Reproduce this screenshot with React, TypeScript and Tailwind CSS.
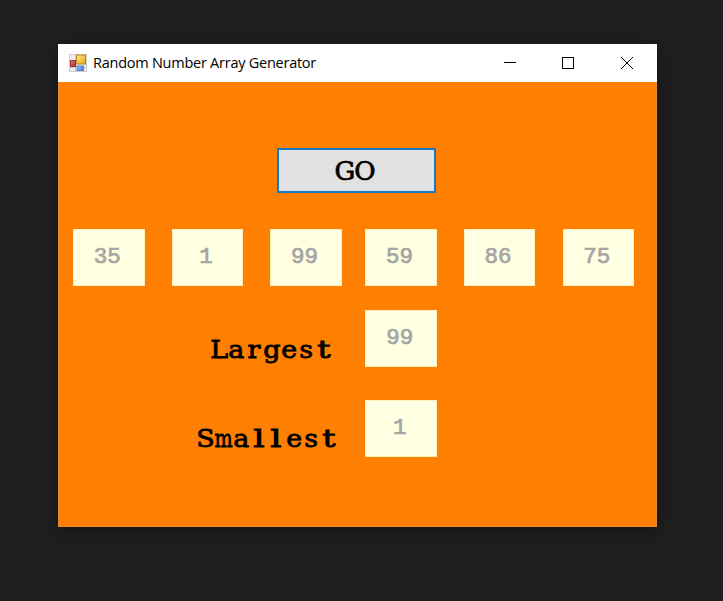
type BoxProps = { value: number; className?: string };

function NumberBox({ value, className = "" }: BoxProps) {
  return (
    <div
      className={`h-[57px] w-[71.5px] shrink-0 border border-[#ffeebb] bg-[#ffffe1] pt-[14px] pr-[3px] text-center text-[22.5px] leading-[26px] text-[#a5a5a5] [-webkit-text-stroke:0.7px_#a5a5a5] ${className}`}
    >
      {value}
    </div>
  );
}

// Slab letters set on a fixed pitch; the wide m is narrowed to its cell.
function SlabText({ text }: { text: string }) {
  return (
    <span className="flex font-['DejaVu_Serif',serif] text-[24.5px] leading-[33px] text-black [-webkit-text-stroke:0.8px_#000]">
      {text.split("").map((ch, i) => (
        <span key={i} className="flex w-[17.6px] justify-center">
          <span className={ch === "m" ? "scale-x-[0.78]" : ch === "l" ? "scale-x-[1.45]" : ch === "t" ? "scale-x-[1.35]" : "scale-x-[1.1]"}>{ch}</span>
        </span>
      ))}
    </span>
  );
}

function FormIcon() {
  return (
    <svg className="ml-[11px] h-[18px] w-[18px] shrink-0" viewBox="0 0 18 18">
      <defs>
        <linearGradient id="gold" x2="1" y2="1">
          <stop stopColor="#ffe48a" />
          <stop offset="1" stopColor="#e5aa12" />
        </linearGradient>
        <linearGradient id="red" x2="1" y2="1">
          <stop stopColor="#e88b85" />
          <stop offset="1" stopColor="#a51d20" />
        </linearGradient>
        <linearGradient id="blue" x2="1" y2="1">
          <stop stopColor="#a0cbff" />
          <stop offset="1" stopColor="#3b70cf" />
        </linearGradient>
      </defs>
      <rect x=".5" y=".5" width="17" height="17" fill="#eeedf0" stroke="#cbcbd0" />
      <path d="M6.5 1v16M1 13.5h16" stroke="#c9c9cf" />
      <rect x="7.5" y="1" width="9" height="9" fill="url(#gold)" stroke="#b98a28" />
      <rect x="1.5" y="6.5" width="5" height="6" fill="url(#red)" stroke="#a4343a" />
      <rect x="8" y="12" width="6.5" height="4.5" fill="url(#blue)" stroke="#5d83c5" />
    </svg>
  );
}

export default function App() {
  return (
    <div className="h-[601px] w-[723px] overflow-hidden bg-[#1f1f1f] pt-11 pl-[58px]">
      <div className="flex h-[483px] w-[599px] flex-col shadow-[0_4px_18px_rgba(0,0,0,0.4)]">
        <header className="flex h-[38px] shrink-0 items-center bg-white">
          <FormIcon />
          <h1 className="ml-[6px] font-['Open_Sans',sans-serif] text-[14.5px] tracking-[-0.25px] text-black">
            Random Number Array Generator
          </h1>
          <svg className="ml-auto h-[38px] w-[158px]" viewBox="0 0 158 38" fill="none" stroke="#000" shapeRendering="crispEdges">
            <path d="M5 18.5h12" />
            <rect x="63.5" y="13.5" width="11" height="11" />
            <path d="m122 13 12 12m0-12-12 12" shapeRendering="auto" />
          </svg>
        </header>
        <main className="flex flex-1 flex-col border border-t-0 border-[#e88b30] bg-[#ff8000] font-['Liberation_Mono',monospace]">
          <button className="mt-[66px] ml-[218px] h-[45px] w-[159px] shrink-0 border-2 border-[#1878c8] bg-[#e1e1e1] pt-px pr-1 font-['DejaVu_Serif',serif] text-[26px] leading-[40px] tracking-[-1px] text-black [-webkit-text-stroke:0.7px_#000]">
            GO
          </button>
          <div className="mt-9 ml-[14px] flex">
            <NumberBox value={35} />
            <NumberBox value={1} className="ml-[27.3px]" />
            <NumberBox value={99} className="ml-[27px]" />
            <NumberBox value={59} className="ml-[23.5px]" />
            <NumberBox value={86} className="ml-[27px]" />
            <NumberBox value={75} className="ml-[27.3px]" />
          </div>
          <div className="mt-6 ml-[151px] flex">
            <div className="mt-[23px] w-[155px]">
              <SlabText text="Largest" />
            </div>
            <NumberBox value={99} className="pl-px" />
          </div>
          <div className="mt-[33px] ml-[138px] flex">
            <div className="mt-[22px] w-[168px]">
              <SlabText text="Smallest" />
            </div>
            <NumberBox value={1} className="pl-px" />
          </div>
        </main>
      </div>
    </div>
  );
}
